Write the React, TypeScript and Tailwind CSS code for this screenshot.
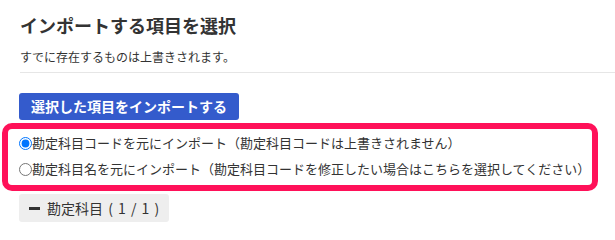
import React from "react";

export default function App() {
  return (
    <div
      className="w-[615px] h-[227px] bg-white pl-[20px] overflow-hidden text-[#333]"
      style={{ fontFamily: '"Noto Sans CJK JP", "Noto Sans", sans-serif' }}
    >
      <h2 className="pt-[12px] text-[18px] leading-[26px] font-bold text-[#333]">
        インポートする項目を選択
      </h2>
      <p className="mt-[10px] text-[12px] leading-[18px] text-[#333]">
        すでに存在するものは上書きされます。
      </p>
      <div className="mt-[6px] h-px bg-[#e6e6e6]" />
      <button
        type="button"
        className="mt-[20px] -ml-px h-[27px] rounded-[3px] bg-[#345bcc] px-[12px] text-[14px] font-bold leading-[27px] text-white"
      >
        選択した項目をインポートする
      </button>
      <div className="mt-[3px] -ml-[18px] w-[596px] rounded-[10px] border-[6px] border-[#ff1159] pt-[1px] pb-[3px] pl-[11px] text-[13px]">
        <label className="flex h-[26px] items-center">
          <input type="radio" name="mode" defaultChecked className="m-0 h-[13px] w-[13px]" />
          <span className="leading-[26px]">
            勘定科目コードを元にインポート（勘定科目コードは上書きされません）
          </span>
        </label>
        <label className="flex h-[26px] items-center">
          <input type="radio" name="mode" className="m-0 h-[13px] w-[13px]" />
          <span className="leading-[26px]">
            勘定科目名を元にインポート（勘定科目コードを修正したい場合はこちらを選択してください）
          </span>
        </label>
      </div>
      <button
        type="button"
        className="mt-[3px] -ml-px flex h-[28px] items-center rounded-[3px] bg-[#eeeeee] pl-[10px] pr-[10px] text-[14px] text-[#333]"
      >
        <span className="mr-[7px] inline-block h-[3px] w-[11px] bg-[#333]" />
        <span className="[word-spacing:2px]">勘定科目 ( 1 / 1 )</span>
      </button>
    </div>
  );
}
